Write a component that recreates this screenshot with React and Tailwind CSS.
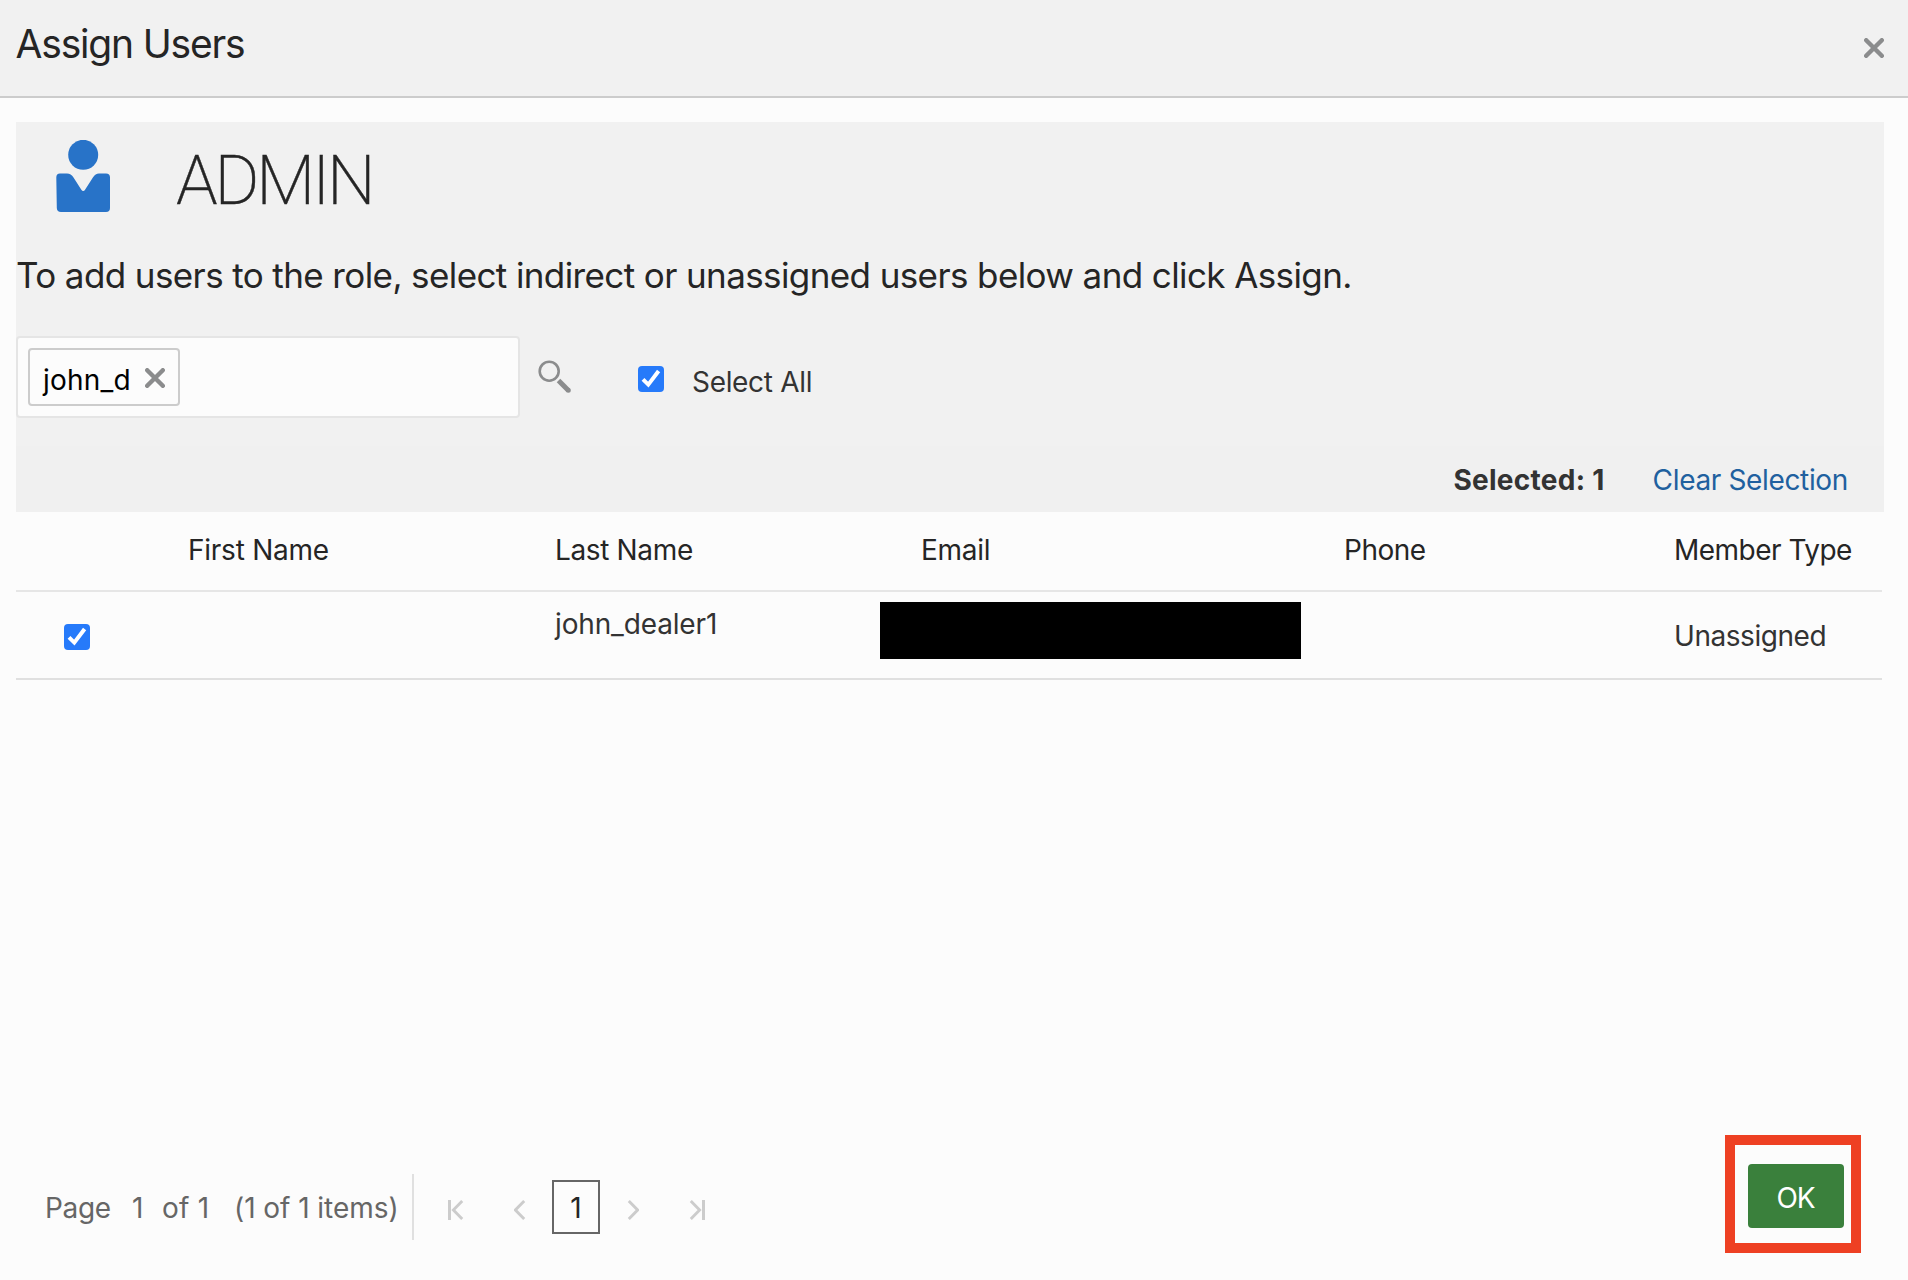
const COLUMNS = "grid grid-cols-[172px_367px_366px_423px_330px_1fr]";

function CrossIcon({ className }) {
  return (
    <svg className={className} width="20" height="20" viewBox="0 0 20 20" aria-hidden="true">
      <path d="M2.200 2.200 17.800 17.800M17.800 2.200 2.200 17.800" stroke="#8b8c8d" strokeWidth="4.400" strokeLinecap="round" fill="none" />
    </svg>
  );
}

function PersonIcon() {
  return (
    <svg width="54" height="72" viewBox="0 0 54 72" fill="#2873c8" aria-hidden="true">
      <circle cx="27.2" cy="14.8" r="15" />
      <path d="M4 33.500H11Q15 33.500 17.500 37.500L25.200 49.500Q27.200 52.500 29.200 49.500L36.900 37.500Q39.400 33.500 43 33.500H50Q54 33.500 54 37.500V68Q54 72 50 72H5Q1 72 .8 68L.3 37.500Q.3 33.500 4 33.500Z" />
    </svg>
  );
}

function SearchIcon({ className }) {
  return (
    <svg className={className} width="34" height="34" viewBox="0 0 34 34" fill="none" stroke="#8b8c8d" aria-hidden="true">
      <circle cx="11.200" cy="11.200" r="9.500" strokeWidth="2.600" />
      <path d="M20.500 20.500 30.200 30.200" strokeWidth="5" />
      <circle cx="30.300" cy="30.300" r="1.200" strokeWidth="2.600" />
    </svg>
  );
}

function Checkbox({ className = "" }) {
  return (
    <span role="checkbox" aria-checked="true" className={`block size-[26px] rounded bg-[#267afa] ${className}`}>
      <svg width="26" height="26" viewBox="0 0 26 26" fill="none" aria-hidden="true">
        <path d="M5 13.400 10.300 18.600 20.600 5" stroke="#fff" strokeWidth="4" />
      </svg>
    </span>
  );
}

function PageArrow({ last, bar, className }) {
  return (
    <svg
      className={`${className} ${last ? "-scale-x-100" : ""}`}
      width={bar ? 16 : 12}
      height="20"
      viewBox={bar ? "0 0 16 20" : "4 0 12 20"}
      fill="none"
      stroke="#ccc"
      aria-hidden="true"
    >
      {bar && <path d="M1.500 0V20" strokeWidth="3" />}
      <path d="M14.200 1 5.400 10 14.200 19" strokeWidth="2.900" />
    </svg>
  );
}

export default function App() {
  return (
    <div className="flex h-screen flex-col overflow-hidden bg-[#fcfcfc] font-['Inter',sans-serif] text-[28px] leading-8 text-[#333]">
      <header className="flex h-[98px] shrink-0 items-center justify-between border-b-2 border-[#ccc] bg-[#f1f1f1] pr-6 pl-[15.500px]">
        <h1 className="pb-2 text-[39px] tracking-[-1.180px] text-[#252525]">Assign Users</h1>
        <button aria-label="Close">
          <CrossIcon />
        </button>
      </header>

      <section className="mt-6 mr-6 ml-4 shrink-0 bg-[#f1f1f1]">
        <div className="flex h-[126px] items-start pt-[18px] pl-10">
          <PersonIcon />
          <h2 className="ml-[66px] font-['Roboto',sans-serif] text-[68.500px] leading-[82px] font-extralight tracking-[-3.100px] text-[#252525] [-webkit-text-stroke:0.4px_#252525]">ADMIN</h2>
        </div>
        <p className="text-[35px] leading-[54px] tracking-[-0.605px] text-[#252525]">
          To add users to the role, select indirect or unassigned users below and click Assign.
        </p>
        <div className="mt-[34px] flex h-[82px]">
          <div className="w-[504px] rounded border-2 border-[#e5e5e5] bg-[#fcfcfc] p-2.5">
            <div className="flex h-[58px] w-[152px] rounded border-2 border-[#ccc] pl-[13px]">
              <span className="mt-3.5 tracking-[0.200px] text-black">john_d</span>
              <CrossIcon className="mt-[18px] ml-3.5" />
            </div>
          </div>
          <SearchIcon className="mt-6 ml-[18px]" />
          <Checkbox className="mt-[30px] ml-[66px]" />
          <span className="mt-[30px] ml-7 tracking-[-0.320px]">Select All</span>
        </div>
        <div className="mt-7 flex h-[66px] items-center justify-end bg-[#f0f0f0] pt-0.5 pr-9">
          <span className="font-bold tracking-[0.280px]">Selected: 1</span>
          <a href="#" className="ml-12 tracking-[-0.350px] text-[#20609f]">Clear Selection</a>
        </div>
      </section>

      <section className="mr-[26px] ml-4">
        <div className={`${COLUMNS} h-20 items-center border-b-2 border-[#e6e6e6] pb-0.5 text-[#252525]`}>
          <span />
          <span className="tracking-[-0.250px]">First Name</span>
          <span className="tracking-[-0.350px]">Last Name</span>
          <span className="tracking-[-0.250px]">Email</span>
          <span className="tracking-[-0.500px]">Phone</span>
          <span className="tracking-[-0.520px]">Member Type</span>
        </div>
        <div className={`${COLUMNS} h-[88px] items-start border-b-2 border-[#e0e0e0]`}>
          <Checkbox className="mt-8 ml-12" />
          <span />
          <span className="mt-4 tracking-[-0.150px]">john_dealer1</span>
          <span className="mt-2.5 -ml-[41px] h-[57px] w-[421px] bg-black" />
          <span />
          <span className="mt-7 tracking-[-0.450px]">Unassigned</span>
        </div>
      </section>

      <footer className="mt-auto flex h-[145px] shrink-0 items-start justify-between pr-[47px] pl-[45px]">
        <nav className="mt-[39px] flex h-[66px] items-center whitespace-nowrap text-[#666]">
          <span className="mt-0.5 w-[67px] tracking-[-0.350px]">Page</span>
          <span className="mt-0.5 ml-5 w-[14px]">1</span>
          <span className="mt-0.5 ml-[16px] w-[48px] tracking-[0.200px]">of 1</span>
          <span className="mt-0.5 ml-6 w-[164px] tracking-[-0.050px]">(1 of 1 items)</span>
          <div className="ml-[14px] h-full w-0.5 bg-[#e0e0e0]" />
          <PageArrow bar className="mt-[6px] ml-[34px]" />
          <PageArrow className="mt-[6px] ml-[50px]" />
          <span className="ml-[26px] flex h-[54px] w-12 items-center justify-center border-2 border-[#666] pt-px text-[#252525]">1</span>
          <PageArrow last className="mt-[6px] ml-[27px]" />
          <PageArrow last bar className="mt-[6px] ml-[50px]" />
        </nav>
        <div className="h-[118px] w-[136px] border-10 border-[#ee4023] pt-[19px] pl-[13px]">
          <button className="h-16 w-24 rounded bg-[#3a803c] pt-1 pr-px tracking-[-1px] text-white">OK</button>
        </div>
      </footer>
    </div>
  );
}
